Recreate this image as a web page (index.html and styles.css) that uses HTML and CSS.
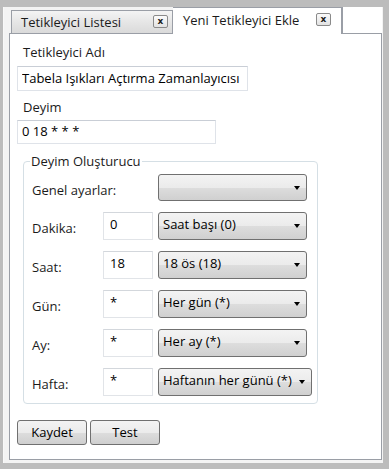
FILE: index.html
```html
<!DOCTYPE html>
<html lang="tr">

<head>
    <meta charset="UTF-8">
    <meta name="viewport" content="width=device-width, initial-scale=1.0">
    <title>Tetikleyici</title>
    <link rel="stylesheet" href="styles.css">
</head>

<body>
    <div class="window">
        <div class="tabs">
            <div class="tab">
                <span class="tabtitle">Tetikleyici Listesi</span>
                <span class="close">x</span>
            </div>
            <div class="tab active">
                <span class="tabtitle">Yeni Tetikleyici Ekle</span>
                <span class="close">x</span>
            </div>
            <div class="tabrest"></div>
        </div>

        <div class="panel">
            <label class="caption">Tetikleyici Adı</label>
            <input class="textbox name" type="text" value="Tabela Işıkları Açtırma Zamanlayıcısı">

            <label class="caption">Deyim</label>
            <input class="textbox expr" type="text" value="0 18 * * *">

            <fieldset class="builder">
                <legend>Deyim Oluşturucu</legend>
                <div class="grid">
                    <span class="rowlabel">Genel ayarlar:</span>
                    <div class="combo general"><span class="arrow"></span></div>

                    <span class="rowlabel">Dakika:</span>
                    <input class="smallbox" type="text" value="0">
                    <div class="combo"><span class="combotext">Saat başı (0)</span><span class="arrow"></span></div>

                    <span class="rowlabel">Saat:</span>
                    <input class="smallbox" type="text" value="18">
                    <div class="combo"><span class="combotext">18 ös (18)</span><span class="arrow"></span></div>

                    <span class="rowlabel">Gün:</span>
                    <input class="smallbox" type="text" value="*">
                    <div class="combo"><span class="combotext">Her gün (*)</span><span class="arrow"></span></div>

                    <span class="rowlabel">Ay:</span>
                    <input class="smallbox" type="text" value="*">
                    <div class="combo"><span class="combotext">Her ay (*)</span><span class="arrow"></span></div>

                    <span class="rowlabel">Hafta:</span>
                    <input class="smallbox" type="text" value="*">
                    <div class="combo wide"><span class="combotext">Haftanın her günü (*)</span><span class="arrow"></span></div>
                </div>
            </fieldset>

            <div class="buttons">
                <button class="btn">Kaydet</button>
                <button class="btn">Test</button>
            </div>
        </div>
    </div>
</body>

</html>
```

FILE: styles.css
```css
body {
    margin: 0;
    padding: 0;
    font-family: 'Open Sans', 'Noto Sans', sans-serif;
    font-size: 12px;
    color: #1b1b1b;
}

.window {
    box-sizing: border-box;
    width: 389px;
    height: 469px;
    border-style: solid;
    border-color: #bcbcbc;
    border-width: 7px 6px 6px 3px;
    box-shadow: inset 1px 0 0 #f8f8f8;
    background: #f3f3f3;
    padding: 0 1px 3px 6px;
    display: flex;
    flex-direction: column;
}

.tabs {
    display: flex;
    align-items: flex-end;
    height: 26px;
    padding-left: 2px;
}

.tab {
    box-sizing: border-box;
    display: flex;
    align-items: center;
    justify-content: space-between;
    height: 23px;
    width: 162px;
    padding: 0 4px 1px 9px;
    border: 1px solid #9a9ea6;
    border-bottom: none;
    background: linear-gradient(#f4f4f4, #e6e6e6 50%, #dadada);
    font-size: 13px;
}

.tab.active {
    height: 27px;
    width: 169px;
    margin-bottom: -1px;
    padding: 0 10px 3px 10px;
    background: #ffffff;
    border-left: none;
    z-index: 1;
}

.tabrest {
    flex: 1;
    height: 26px;
    box-sizing: border-box;
    border-left: 1px solid #9a9ea6;
    background: #ffffff;
}

.close {
    box-sizing: border-box;
    width: 15px;
    height: 13px;
    border: 1px solid #8a8a8a;
    border-radius: 2px;
    background: linear-gradient(#fbfbfb, #e2e2e2);
    font-family: 'DejaVu Sans', sans-serif;
    font-weight: bold;
    font-size: 9px;
    line-height: 10px;
    text-align: center;
}

.panel {
    flex: 1;
    border: 1px solid #9a9ea6;
    background: #ffffff;
    padding: 8px 7px 0 7px;
    display: flex;
    flex-direction: column;
    align-items: flex-start;
}

.caption {
    display: block;
    height: 20px;
    line-height: 20px;
    padding-left: 6px;
    font-size: 13px;
}

.textbox {
    box-sizing: border-box;
    height: 25px;
    margin: 4px 0 6px 0;
    padding: 0 0 2px 4px;
    border: 1px solid #dfe3e9;
    border-top-color: #c9ced6;
    font-family: inherit;
    font-size: 13px;
    color: #000;
}

.name {
    width: 231px;
}

.expr {
    width: 199px;
    height: 24px;
    margin-top: 3px;
}

.builder {
    box-sizing: border-box;
    width: 295px;
    min-width: 0;
    margin: 1px 0 0 6px;
    padding: 3px 6px 7px 6px;
    border: 1px solid #d5dfe5;
    border-radius: 4px;
}

.builder legend {
    padding: 0 1px;
    line-height: 20px;
    font-size: 13px;
}

.grid {
    display: grid;
    grid-template-columns: 66px 50px 154px;
    grid-template-rows: 27px repeat(5, 28px);
    row-gap: 11px;
    column-gap: 5px;
    margin-left: 2px;
    align-items: center;
}

.rowlabel {
    font-size: 13px;
    padding-top: 4px;
    white-space: nowrap;
}

.smallbox {
    box-sizing: border-box;
    width: 50px;
    height: 28px;
    padding: 0 0 5px 6px;
    border: 1px solid #e1e4e8;
    border-top-color: #d3d7dc;
    font-family: inherit;
    font-size: 13px;
    color: #000;
}

.combo {
    box-sizing: border-box;
    position: relative;
    width: 149px;
    height: 28px;
    padding: 0 0 4px 4px;
    display: flex;
    align-items: center;
    border: 1px solid #707070;
    border-radius: 3px;
    background: linear-gradient(#f3f3f3, #ebebeb 50%, #dddddd 51%, #d0d0d0);
    font-size: 13px;
    color: #000;
}

.combo.general {
    grid-column: 2 / 4;
    justify-self: end;
    margin-right: 5px;
    height: 27px;
}

.combo.wide {
    width: 154px;
}

.arrow {
    position: absolute;
    right: 6px;
    top: 11px;
    width: 0;
    height: 0;
    border-left: 3.5px solid transparent;
    border-right: 3.5px solid transparent;
    border-top: 4px solid #000;
}

.buttons {
    display: flex;
    gap: 3px;
    margin-top: 16px;
}

.btn {
    box-sizing: border-box;
    width: 70px;
    height: 25px;
    padding: 0 0 2px 0;
    border: 1px solid #707070;
    border-radius: 3px;
    background: linear-gradient(#f3f3f3, #ebebeb 50%, #dddddd 51%, #cfcfcf);
    font-family: inherit;
    font-size: 13px;
    color: #000;
}
```
